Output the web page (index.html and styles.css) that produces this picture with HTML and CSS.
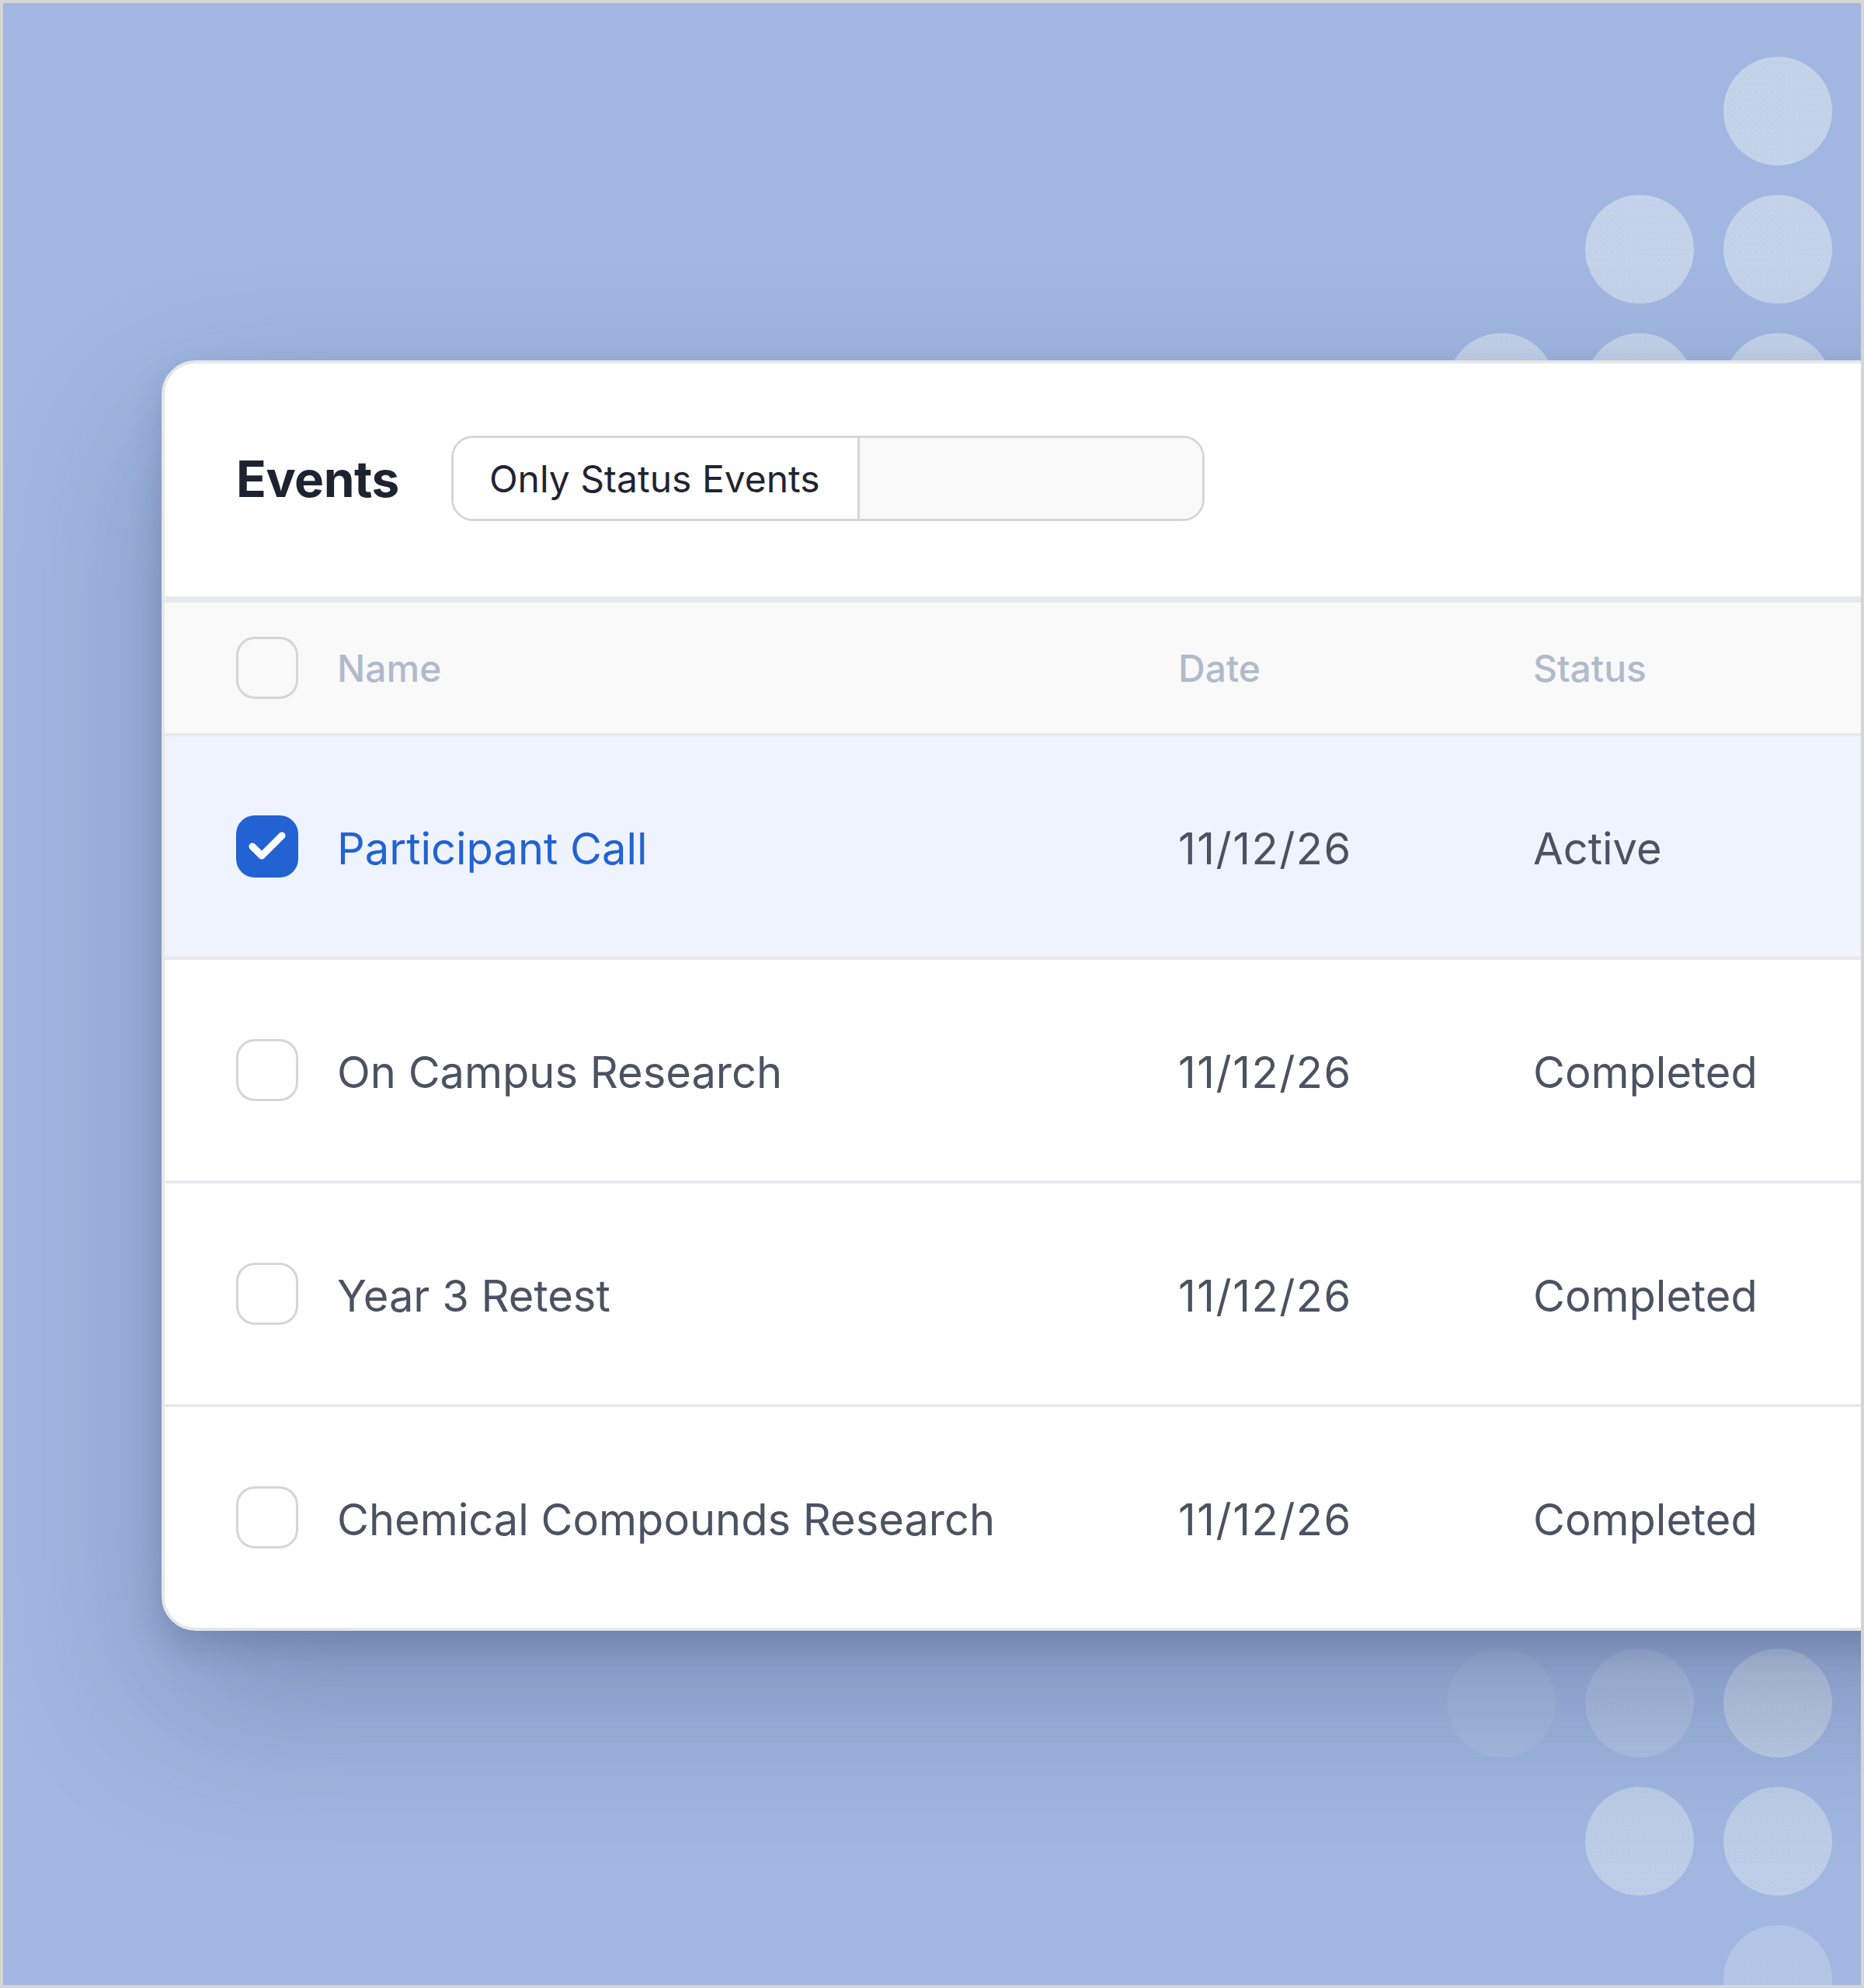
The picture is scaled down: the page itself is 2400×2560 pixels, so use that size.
FILE: index.html
```html
<!DOCTYPE html>
<html lang="en">
<head>
<meta charset="utf-8">
<title>Events</title>
<link rel="stylesheet" href="styles.css">
</head>
<body>
<div class="frame">
  <div class="dots" aria-hidden="true">
    <span class="dot" style="left:2215px;top:69px"></span>
    <span class="dot" style="left:2037px;top:247px"></span>
    <span class="dot" style="left:2215px;top:247px"></span>
    <span class="dot" style="left:1859px;top:425px"></span>
    <span class="dot" style="left:2037px;top:425px"></span>
    <span class="dot" style="left:2215px;top:425px"></span>
    <span class="dot" style="left:1859px;top:2119px;opacity:0.22"></span>
    <span class="dot" style="left:2037px;top:2119px;opacity:0.42"></span>
    <span class="dot" style="left:2215px;top:2119px;opacity:0.85"></span>
    <span class="dot" style="left:2037px;top:2297px;opacity:0.85"></span>
    <span class="dot" style="left:2215px;top:2297px;opacity:0.85"></span>
    <span class="dot" style="left:2215px;top:2475px;opacity:0.55"></span>
  </div>

  <section class="card">
    <header class="card-head">
      <h1 class="title">Events</h1>
      <div class="segmented">
        <span class="seg seg-on">Only Status Events</span>
        <span class="seg seg-off"></span>
      </div>
    </header>

    <div class="table">
      <div class="row row-head">
        <span class="box"></span>
        <span class="cell">Name</span>
        <span class="cell">Date</span>
        <span class="cell">Status</span>
      </div>
      <div class="row row-selected">
        <span class="box box-checked">
          <svg viewBox="0 0 80 80" width="80" height="80"><polyline points="21,40 33,52 59,26" fill="none" stroke="#fff" stroke-width="9" stroke-linecap="round" stroke-linejoin="round"/></svg>
        </span>
        <span class="cell name">Participant Call</span>
        <span class="cell date">11/12/26</span>
        <span class="cell">Active</span>
      </div>
      <div class="row">
        <span class="box"></span>
        <span class="cell name">On Campus Research</span>
        <span class="cell date">11/12/26</span>
        <span class="cell">Completed</span>
      </div>
      <div class="row">
        <span class="box"></span>
        <span class="cell name">Year 3 Retest</span>
        <span class="cell date">11/12/26</span>
        <span class="cell">Completed</span>
      </div>
      <div class="row row-last">
        <span class="box"></span>
        <span class="cell name">Chemical Compounds Research</span>
        <span class="cell date">11/12/26</span>
        <span class="cell">Completed</span>
      </div>
    </div>
  </section>
</div>
</body>
</html>
```

FILE: styles.css
```css
* { box-sizing: border-box; }

html, body {
  margin: 0;
  padding: 0;
}

body {
  font-family: Inter, "Noto Sans", "Liberation Sans", sans-serif;
  background: #a1b7e1;
}

.frame {
  position: relative;
  width: 2400px;
  height: 2560px;
  border: 4px solid #d5d5d5;
  background: #a1b7e1;
  overflow: hidden;
  padding: 460px 0 0 204px;
}

.dots {
  position: absolute;
  inset: 0;
}

.dot {
  position: absolute;
  width: 140px;
  height: 140px;
  border-radius: 50%;
  background-color: #c3d2e9;
  background-image: radial-gradient(rgba(255, 255, 255, 0.35) 0.7px, transparent 1px);
  background-size: 7px 7px;
}

.card {
  position: relative;
  z-index: 1;
  width: 2400px;
  background: #ffffff;
  border: 4px solid #e6e7ea;
  border-radius: 44px;
  box-shadow: 0 20px 40px rgba(30, 45, 85, 0.18), 0 90px 200px rgba(30, 45, 85, 0.28);
  overflow: hidden;
}

.card-head {
  height: 308px;
  padding-bottom: 4px;
  border-bottom: 8px solid #e8e9ec;
  display: flex;
  align-items: center;
  padding-left: 92px;
  gap: 67px;
}

.title {
  margin: 0;
  font-size: 64px;
  font-weight: 700;
  color: #1e2330;
  letter-spacing: -0.5px;
}

.segmented {
  display: flex;
  height: 110px;
  border: 3px solid #d6d6d6;
  border-radius: 28px;
  overflow: hidden;
}

.seg {
  display: flex;
  align-items: center;
}

.seg-on {
  padding: 0 46px;
  width: 520px;
  background: #ffffff;
  font-size: 48px;
  color: #1f2432;
  white-space: nowrap;
}

.seg-off {
  width: 444px;
  background: #f9f9f9;
  border-left: 3px solid #d6d6d6;
}

.table {
  display: flex;
  flex-direction: column;
}

.row {
  display: grid;
  grid-template-columns: 130px 1083px 457px 1fr;
  align-items: center;
  height: 288px;
  padding-left: 92px;
  padding-top: 6px;
  border-bottom: 4px solid #e8e9ec;
  font-size: 56px;
  color: #4b5261;
  background: #ffffff;
}

.row .box {
  margin-top: -6px;
}

.row-last {
  border-bottom: none;
  height: 284px;
}

.row-head {
  height: 172px;
  padding-top: 0;
  background: #f9f9f9;
  font-size: 48px;
  font-weight: 500;
  color: #b1bacb;
}

.row-head .box {
  margin-top: 0;
  background: #f9f9f9;
}

.row-selected {
  background: #eff3fd;
}

.row-selected .name {
  color: #2262d3;
}

.cell {
  white-space: nowrap;
}

.date {
  letter-spacing: 1.5px;
}

.box {
  display: block;
  width: 80px;
  height: 80px;
  border: 3px solid #d6d6d6;
  border-radius: 24px;
  background: transparent;
}

.box-checked {
  border: none;
  background: #2262d3;
}

.box-checked svg {
  display: block;
}
```
